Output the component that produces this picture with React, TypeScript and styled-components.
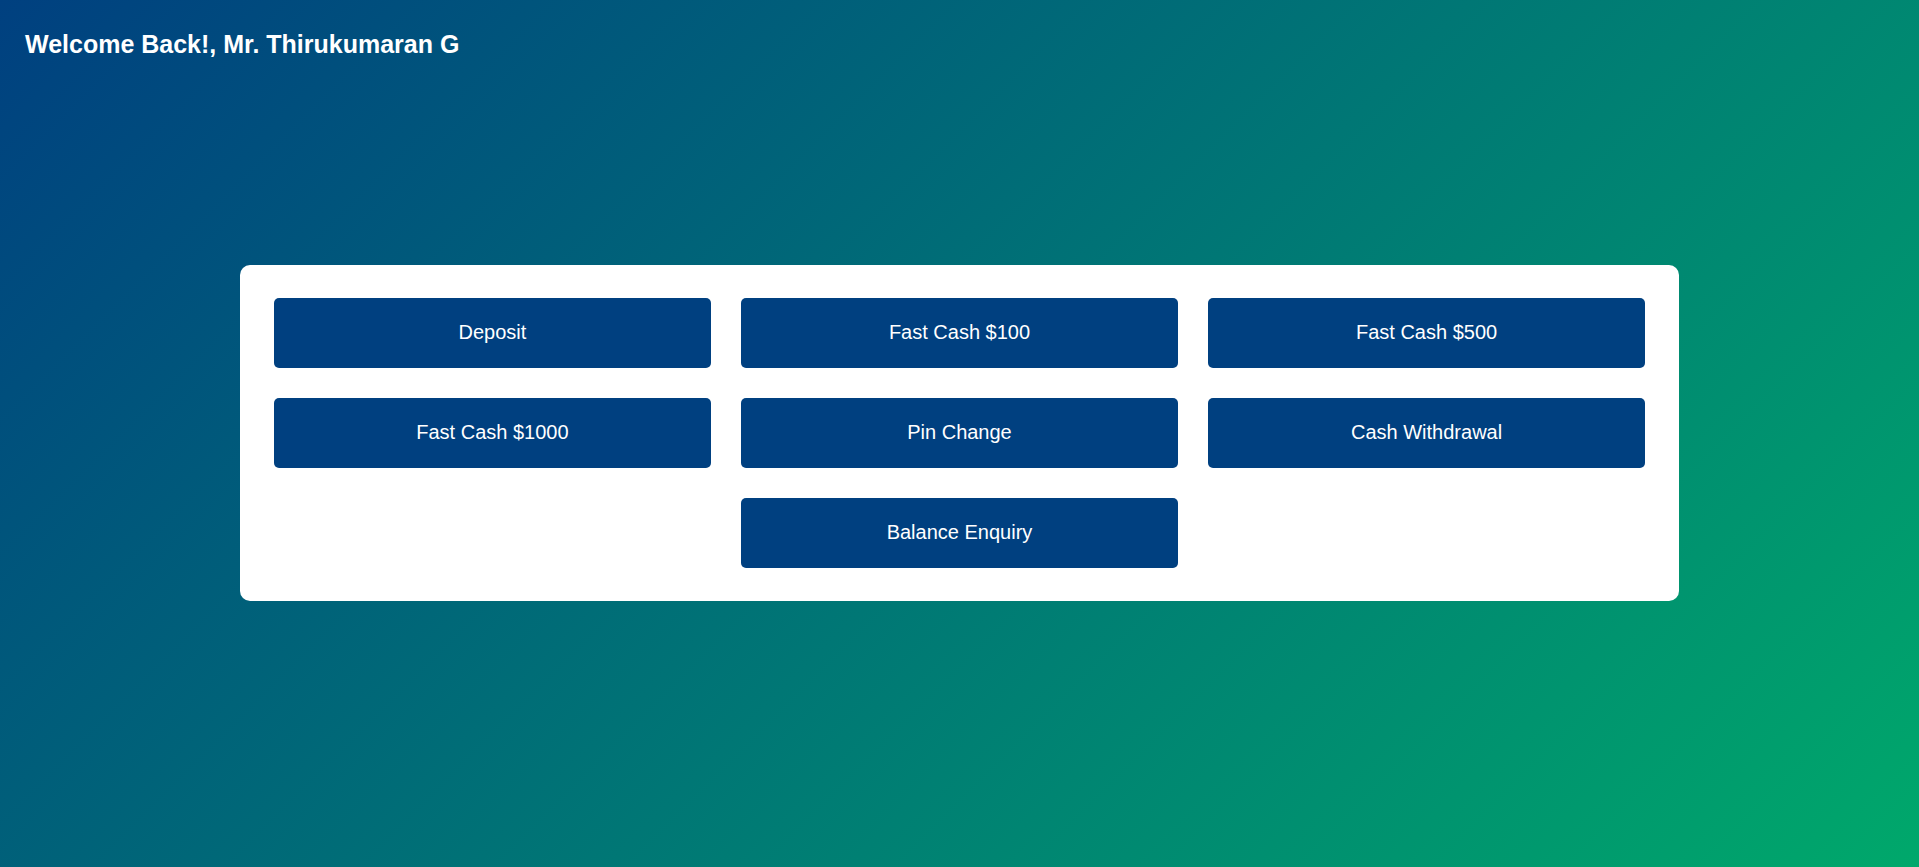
import React from "react";
import styled, { createGlobalStyle } from "styled-components";

const GlobalStyle = createGlobalStyle`
  html, body {
    margin: 0;
    padding: 0;
  }
  body {
    font-family: "Liberation Sans", Arial, sans-serif;
  }
  * { box-sizing: border-box; }
`;

const Page = styled.div`
  min-height: 100vh;
  display: flex;
  flex-direction: column;
  background: linear-gradient(135deg, #004080 0%, #00a86b 100%);
  color: #ffffff;
`;

const Header = styled.header`
  height: 59px;
  padding: 30px 0 0 25px;
`;

const Greeting = styled.h1`
  margin: 0;
  font-size: 25px;
  line-height: 29px;
  font-weight: 700;
  color: #ffffff;
`;

const Main = styled.main`
  flex: 1;
  display: flex;
  align-items: center;
  justify-content: center;
  padding-bottom: 61px;
`;

const Card = styled.div`
  width: 75%;
  background: #ffffff;
  border-radius: 10px;
  padding: 33px 34px;
  display: grid;
  grid-template-columns: repeat(3, 1fr);
  gap: 30px;
`;

const ActionButton = styled.button<{ $col?: number }>`
  height: 70px;
  border: none;
  border-radius: 5px;
  background: #004080;
  color: #ffffff;
  font-family: "Liberation Sans", Arial, sans-serif;
  font-size: 20px;
  cursor: pointer;
  grid-column: ${(p) => (p.$col ? String(p.$col) : "auto")};
`;

const actions = [
  "Deposit",
  "Fast Cash $100",
  "Fast Cash $500",
  "Fast Cash $1000",
  "Pin Change",
  "Cash Withdrawal",
];

export default function App() {
  return (
    <>
      <GlobalStyle />
      <Page>
        <Header>
          <Greeting>Welcome Back!, Mr. Thirukumaran G</Greeting>
        </Header>
        <Main>
          <Card>
            {actions.map((a) => (
              <ActionButton key={a}>{a}</ActionButton>
            ))}
            <ActionButton $col={2}>Balance Enquiry</ActionButton>
          </Card>
        </Main>
      </Page>
    </>
  );
}
